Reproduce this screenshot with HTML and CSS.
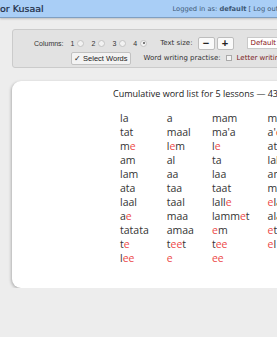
FILE: index.html
```html
<!DOCTYPE html>
<html lang="en">
<head>
  <meta charset="UTF-8" />
  <meta name="viewport" content="width=device-width, initial-scale=1" />
  <title>Word lists for Kusaal</title>
  <link rel="stylesheet" href="styles.css">
</head>
<body>

  <div class="page">

    <header>
      <h1>or Kusaal</h1>
      <div class="login">Logged in as: <b>default</b> [ Log out ]</div>
    </header>

    <div class="toolbar">
      <div class="tool-row first">
        <span class="columns">Columns:
          <label>1 <span class="radio"></span></label>
          <label>2 <span class="radio"></span></label>
          <label>3 <span class="radio"></span></label>
          <label>4 <span class="radio on"></span></label>
        </span>
        <span class="label">Text size:</span>
        <button class="size-btn">&minus;</button>
        <button class="size-btn">+</button>
        <span class="select">Default size</span>
      </div>
      <div class="tool-row second">
        <button class="select-btn">&#10003; Select Words</button>
        <span class="label">Word writing practise:</span>
        <span class="check"></span>
        <span class="label red">Letter writing practise:</span>
      </div>
    </div>

    <div class="card">
      <h2>Cumulative word list for 5 lessons &mdash; 43 words</h2>
      <div class="words">
        <ul>
          <li>la</li>
          <li>tat</li>
          <li>m<i>e</i></li>
          <li>am</li>
          <li>lam</li>
          <li>ata</li>
          <li>laal</li>
          <li>a<i>e</i></li>
          <li>tatata</li>
          <li>t<i>e</i></li>
          <li>l<i>ee</i></li>
        </ul>
        <ul>
          <li>a</li>
          <li>maal</li>
          <li>l<i>e</i>m</li>
          <li>al</li>
          <li>aa</li>
          <li>taa</li>
          <li>taal</li>
          <li>maa</li>
          <li>amaa</li>
          <li>t<i>ee</i>t</li>
          <li><i>e</i></li>
        </ul>
        <ul>
          <li>mam</li>
          <li>ma'a</li>
          <li>l<i>e</i></li>
          <li>ta</li>
          <li>laa</li>
          <li>taat</li>
          <li>lall<i>e</i></li>
          <li>lamm<i>e</i>t</li>
          <li><i>e</i>m</li>
          <li>t<i>ee</i></li>
          <li><i>ee</i></li>
        </ul>
        <ul>
          <li>maa</li>
          <li>a'<i>e</i></li>
          <li>ata</li>
          <li>lal</li>
          <li>am</li>
          <li>maal</li>
          <li><i>e</i>la</li>
          <li>ala</li>
          <li><i>e</i>t</li>
          <li><i>e</i>l</li>
        </ul>
      </div>
    </div>

  </div>

</body>
</html>
```

FILE: styles.css
```css
* {
  margin: 0;
  padding: 0;
  box-sizing: border-box;
}

html, body {
  overflow: hidden;
}

body {
  background: #ededed;
  color: #333;
  font-family: 'DejaVu Sans', sans-serif;
}

.page {
  width: 300px;
}

header {
  height: 18px;
  background: #a9cef6;
  border-bottom: 1px solid #7f9fc2;
  box-shadow: 0 1px 2px rgba(0,0,0,0.2);
  display: flex;
  align-items: center;
}

header h1 {
  font-size: 9.5px;
  font-weight: normal;
  color: #1b2a44;
  -webkit-text-stroke: 0.2px #1b2a44;
}

.login {
  margin-left: auto;
  margin-right: 17px;
  font-size: 6.7px;
  color: #3d5875;
  white-space: nowrap;
}

.toolbar {
  margin: 11px 0 0 12px;
  height: 39px;
  background: #e2e2e2;
  border: 1px solid #cbcbcb;
  border-radius: 3px;
  padding-top: 6px;
}

.tool-row {
  display: flex;
  align-items: center;
  height: 14px;
  font-size: 7px;
  color: #333;
  white-space: nowrap;
}

.tool-row > * {
  flex-shrink: 0;
}

.tool-row.first {
  padding-left: 21px;
}

.tool-row.second {
  padding-left: 58px;
  margin-top: 1px;
}

.columns {
  font-family: 'Liberation Sans', sans-serif;
  font-size: 7px;
  display: flex;
  align-items: center;
  gap: 7px;
  margin-right: 13px;
}

.columns label {
  display: flex;
  align-items: center;
  gap: 3px;
}

.radio {
  width: 7px;
  height: 7px;
  border-radius: 50%;
  border: 1px solid #c4c4c4;
  background: #f2f2f2;
  position: relative;
}

.radio.on::after {
  content: "";
  position: absolute;
  left: 1.5px;
  top: 1.5px;
  width: 2px;
  height: 2px;
  border-radius: 50%;
  background: #555;
}

.label {
  margin-right: 5px;
}

.label.red {
  color: #7a1a1a;
  margin-left: 5px;
}

.size-btn {
  width: 17px;
  height: 13px;
  margin-right: 2px;
  background: #fafafa;
  border: 1px solid #bdbdbd;
  border-radius: 2px;
  font-size: 11px;
  line-height: 10px;
  font-weight: bold;
  color: #222;
}

.select {
  margin-left: 11px;
  height: 12px;
  padding: 0 3px;
  line-height: 11px;
  background: #fff;
  border: 1px solid #c9c9c9;
  color: #8a1414;
}

.select-btn {
  height: 13px;
  padding: 0 2px;
  margin-right: 13px;
  background: #f3f3f3;
  border: 1px solid #c2c2c2;
  border-radius: 2px;
  font-family: 'Liberation Sans', sans-serif;
  font-size: 7.5px;
  color: #222;
  white-space: nowrap;
}

.check {
  width: 6px;
  height: 6px;
  border: 1px solid #aaa;
  background: #f4f4f4;
}

.card {
  margin: 13px 0 0 12px;
  height: 207px;
  background: #fff;
  border-radius: 9px;
  box-shadow: -1px 1px 3px rgba(0,0,0,0.25);
  padding-top: 6px;
}

.card h2 {
  margin-left: 101px;
  font-family: 'Open Sans', sans-serif;
  font-size: 9px;
  font-weight: normal;
  color: #222;
  white-space: nowrap;
}

.words {
  display: flex;
  gap: 18px;
  margin: 11px 0 0 108px;
}

.words ul {
  list-style: none;
  flex-shrink: 0;
}

.words li {
  height: 14px;
  line-height: 14px;
  font-family: 'Open Sans', sans-serif;
  font-size: 10.5px;
  color: #333;
}

.words i {
  font-style: normal;
  color: #ec4848;
}
```
